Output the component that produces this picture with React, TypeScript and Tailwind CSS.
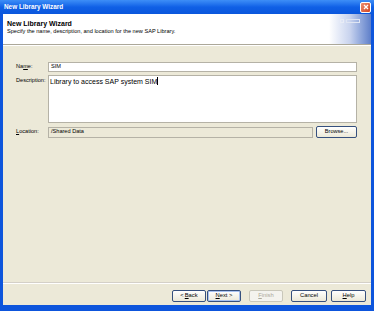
import React from "react";

const font = { fontFamily: '"Liberation Sans", Arial, sans-serif' };

function Btn({ children, w, disabled, focus }: { children: React.ReactNode; w: string; disabled?: boolean; focus?: boolean }) {
  return (
    <div
      className={`${w} h-[12px] rounded-[2px] border flex items-center justify-center text-[5.8px] leading-none ${
        disabled ? "border-[#c9c7ba] text-[#aca899] bg-[#f4f3ee]" : "border-[#36507e] text-black bg-gradient-to-b from-[#ffffff] to-[#ece9d8]"
      } ${focus ? "shadow-[inset_0_0_0_1px_#a8c2f0]" : ""}`}
    >
      {children}
    </div>
  );
}

export default function App() {
  return (
    <div className="w-[374px] h-[311px] flex flex-col bg-[#0d55dc] overflow-hidden" style={font}>
      {/* title bar */}
      <div className="h-[14px] flex items-center pl-[4px] pr-[2px] bg-gradient-to-b from-[#3d8ef7] via-[#1060e6] to-[#0a56dc]">
        <span className="text-white font-bold text-[6.4px] leading-none flex-1">New Library Wizard</span>
        <div className="w-[11px] h-[11px] rounded-[2px] border border-white bg-gradient-to-br from-[#ec8e70] to-[#d2421e] flex items-center justify-center mr-[1px]">
          <svg width="6" height="6" viewBox="0 0 6 6">
            <path d="M1 1L5 5M5 1L1 5" stroke="white" strokeWidth="1.3" />
          </svg>
        </div>
      </div>
      {/* client */}
      <div className="flex-1 flex flex-col ml-[3px] mr-[3px] mb-[6px] bg-[#ece9d8]">
        {/* header */}
        <div className="h-[31px] flex bg-white border-b border-[#aca899]">
          <div className="flex-1 pl-[4px] pt-[6px] flex flex-col gap-[2px]">
            <span className="font-bold text-[7px] leading-none text-black">New Library Wizard</span>
            <span className="text-[5.6px] leading-none text-black">Specify the name, description, and location for the new SAP Library.</span>
          </div>
          <div className="w-[42px] bg-gradient-to-r from-[#ffffff] via-[#c8d3ee] to-[#5f7fc9] relative">
            <div className="absolute left-[11px] top-[5px] w-[4px] h-[4px] border border-[#e8ecf6]" />
            <div className="absolute left-[17px] top-[5px] w-[14px] h-[4px] border border-[#dfe5f3]" />
          </div>
        </div>
        <div className="h-px bg-white" />
        {/* form */}
        <div className="flex-1 pl-[13px] pr-[14px] pt-[16px] flex flex-col">
          <div className="flex items-center h-[10px]">
            <span className="w-[32px] text-[5.6px] leading-none">
              Na<span className="underline">m</span>e:
            </span>
            <div className="flex-1 h-[10px] bg-white border border-[#b5b2a6] flex items-center pl-[2px] text-[5.6px] leading-none">SIM</div>
          </div>
          <div className="flex mt-[3px]">
            <span className="w-[32px] text-[5.6px] leading-none pt-[3px]">Description:</span>
            <div className="flex-1 h-[48px] bg-white border border-[#b5b2a6] pl-[1px] pt-[2px] text-[7px] leading-none flex items-start">
              <span>Library to access SAP system SIM</span>
              <span className="inline-block w-px h-[8px] bg-black -mt-[1px]" />
            </div>
          </div>
          <div className="flex items-center mt-[3px]">
            <span className="w-[32px] text-[5.6px] leading-none">
              <span className="underline">L</span>ocation:
            </span>
            <div className="flex-1 h-[11px] bg-[#ece9d8] border border-[#b5b2a6] flex items-center pl-[2px] text-[5.6px] leading-none">/Shared Data</div>
            <div className="ml-[3px] w-[41px] h-[12px] rounded-[2px] border border-[#36507e] bg-gradient-to-b from-[#ffffff] to-[#ece9d8] flex items-center justify-center text-[5.6px] leading-none">
              Browse...
            </div>
          </div>
        </div>
        {/* footer */}
        <div className="h-px bg-[#d4d0c8]" />
        <div className="h-px bg-white" />
        <div className="flex items-center justify-end pr-[5px] pt-[6px] pb-[3px]">
          <Btn w="w-[34px]">
            &lt; <span className="underline ml-[1px]">B</span>ack
          </Btn>
          <div className="w-[1px]" />
          <Btn w="w-[34px]" focus>
            <span className="underline">N</span>ext &gt;
          </Btn>
          <div className="w-[8px]" />
          <Btn w="w-[34px]" disabled>
            <span className="underline">F</span>inish
          </Btn>
          <div className="w-[8px]" />
          <Btn w="w-[36px]">Cancel</Btn>
          <div className="w-[4px]" />
          <Btn w="w-[35px]">
            <span className="underline">H</span>elp
          </Btn>
        </div>
      </div>
    </div>
  );
}
